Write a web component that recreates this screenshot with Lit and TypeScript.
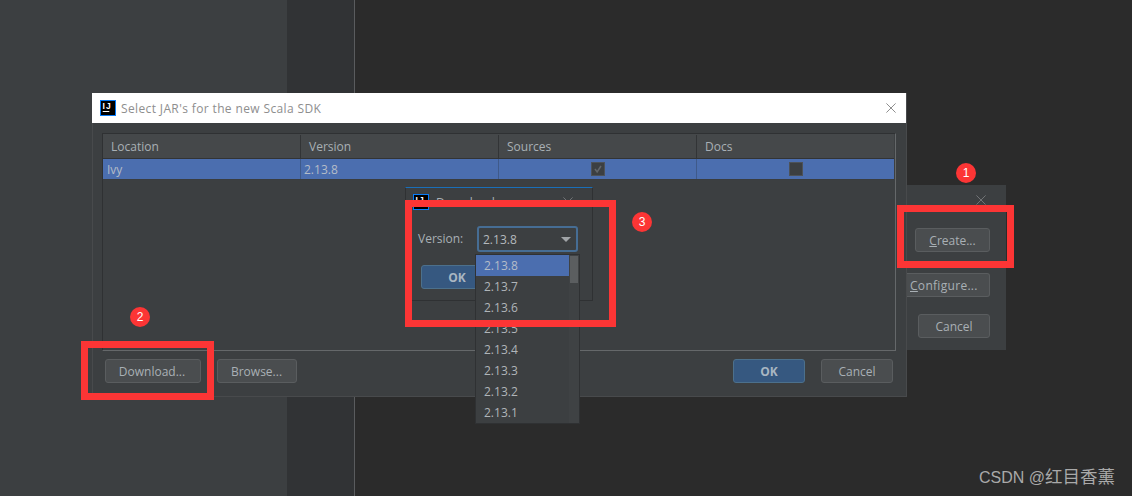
import { LitElement, html, css } from "lit";
import { customElement } from "lit/decorators.js";

const logo = (cls: string) => html`<svg class=${cls} viewBox="0 0 16 16"><rect x="0.5" y="0.5" width="15" height="15" fill="#000" stroke="#087cfa"/><text x="2.5" y="8.6" font-family="Liberation Sans" font-weight="700" font-size="8.5" letter-spacing="1.2" fill="#fff">IJ</text><rect x="2.7" y="11" width="6.6" height="1" fill="#fff"/></svg>`;
const closeX = (cls: string, c: string) => html`<svg class=${cls} viewBox="0 0 12 12"><path d="M.5.5l11 11M11.5.5l-11 11" fill="none" stroke=${c}/></svg>`;

@customElement("app-root")
export class AppRoot extends LitElement {
  static styles = css`
    :host { display: block; width: 1132px; height: 496px; position: relative; overflow: hidden; background: #2b2b2b; font-family: "Open Sans", "Liberation Sans", sans-serif; font-size: 12px; color: #a9b0b5; }
    .abs { position: absolute; }
    .side { left: 0; top: 0; width: 287px; height: 496px; background: #3c3f41; }
    .side2 { left: 287px; top: 0; width: 67px; height: 496px; background: #313335; border-right: 1px solid #5a5c5e; }
    .btn { position: absolute; box-sizing: border-box; height: 24px; display: flex; align-items: center; justify-content: center; background: #4a4d4f; border: 1px solid #5a5d5f; border-radius: 3px; font-size: 12px; color: #a9b0b5; white-space: nowrap; }
    .btn.ok { background: #365880; border-color: #4c708c; font-weight: 700; color: #a9b6c2; }
    .u { text-decoration: underline; }

    .back { left: 907px; top: 185px; width: 99px; height: 165px; background: #3c3f41; }
    .back-x { position: absolute; left: 69px; top: 10px; width: 10px; height: 10px; }
    .create { left: 8px; top: 43px; width: 75px; }
    .configure { left: 0; top: 88px; width: 83px; border-left: 0; border-radius: 0 3px 3px 0; justify-content: flex-start; padding-left: 3px; letter-spacing: 0.3px; }
    .cancel-b { left: 11px; top: 129px; width: 72px; }

    .win { left: 92px; top: 93px; width: 815px; height: 304px; background: #3c3f41; box-shadow: inset 0 0 0 1px #484a4c; }
    .title { height: 30px; margin-right: 1px; background: #fff; display: flex; align-items: center; padding-left: 8px; gap: 5px; color: #8e8e8e; font-size: 12px; letter-spacing: 0.37px; }
    .t-logo { width: 16px; height: 16px; }
    .t-x { position: absolute; left: 794px; top: 10px; width: 10px; height: 10px; }
    .tbl { position: absolute; left: 10px; top: 40px; width: 794px; height: 218px; box-sizing: border-box; border: 1px solid #2f3133; border-right-color: #65686a; border-bottom-color: #65686a; }
    .row { display: grid; width: 791px; grid-template-columns: 198px 198px 198px 197px; }
    .head { height: 25px; box-sizing: border-box; background: #45484a; border-bottom: 1px solid #323436; }
    .head div { display: flex; align-items: center; padding-left: 8px; border-right: 1px solid #323436; margin-top: 1px; }
    .head div:last-child { border-right: 0; }
    .sel { height: 21px; background: #4b6eaf; border-bottom: 1px solid #3a3d3f; color: #b4bcc8; box-sizing: border-box; }
    .sel > div { display: flex; align-items: center; padding-left: 3px; border-right: 1px solid #3f5a8a; }
    .sel > div:first-child { padding-left: 4px; }
    .sel > div:last-child { border-right: 0; }
    .sel > .c { justify-content: center; padding-left: 0; }
    .cb { width: 14px; height: 14px; box-sizing: border-box; background: #3c3f41; border: 1px solid #4d5258; display: block; }
    .w-dl { left: 13px; top: 266px; width: 96px; padding-right: 2px; }
    .w-br { left: 125px; top: 266px; width: 80px; padding-right: 1px; }
    .w-ok { left: 641px; top: 266px; width: 72px; }
    .w-ca { left: 729px; top: 266px; width: 72px; }

    .dl { left: 405px; top: 187px; width: 188px; height: 114px; box-sizing: border-box; background: #3c3f41; border: 1px solid #2f3133; border-top: 1px solid #1a6fb8; }
    .d-title { position: absolute; left: 30px; top: 6px; color: #a9b0b5; font-size: 12px; letter-spacing: 0.3px; }
    .d-logo { position: absolute; left: 7px; top: 6px; width: 16px; height: 16px; }
    .d-x { position: absolute; left: 157px; top: 9px; width: 10px; height: 10px; }
    .v-label { position: absolute; left: 12px; top: 42px; }
    .combo { position: absolute; left: 71px; top: 38px; width: 101px; height: 26px; box-sizing: border-box; background: #3c3f41; border: 2px solid #466d94; border-radius: 3px; display: flex; align-items: center; padding-left: 4px; color: #b4b9bd; }
    .arrow { position: absolute; right: 5px; top: 9px; width: 0; height: 0; border-left: 5px solid transparent; border-right: 5px solid transparent; border-top: 5px solid #a0a4a7; }
    .d-ok { left: 15px; top: 77px; width: 72px; }

    .pop { left: 475px; top: 254px; width: 105px; height: 170px; box-sizing: border-box; background: #3c3f41; border: 1px solid #2f3133; }
    .it { height: 21px; display: flex; align-items: center; padding-left: 8px; color: #b0b5b9; }
    .it.on { background: #4b6eaf; margin-right: 10px; color: #b4bcc8; }
    .track { position: absolute; right: 0; top: 0; width: 10px; height: 168px; background: #3f4244; }
    .thumb { position: absolute; left: 1px; top: 1px; width: 8px; height: 27px; background: #5b5e60; }

    .red { box-sizing: border-box; border: 7px solid #fc3535; }
    .r1 { left: 897px; top: 205px; width: 117px; height: 63px; }
    .r2 { left: 81px; top: 341px; width: 133px; height: 59px; }
    .r3 { left: 405px; top: 200px; width: 211px; height: 127px; }
    .dot { width: 20px; height: 20px; border-radius: 50%; background: #fc3535; color: #fff; display: flex; align-items: center; justify-content: center; font: 12px "Liberation Sans", sans-serif; }
    .d1 { left: 956px; top: 163px; }
    .d2 { left: 130px; top: 307px; }
    .d3 { left: 632px; top: 212px; }
    .wm { left: 979px; top: 463px; font: 16px "Liberation Sans", "Noto Sans CJK SC", sans-serif; color: #a9a9a9; white-space: nowrap; }
    .wm b { font-weight: 400; font-size: 17.5px; }
  `;

  render() {
    const vers = ["2.13.8", "2.13.7", "2.13.6", "2.13.5", "2.13.4", "2.13.3", "2.13.2", "2.13.1"];
    return html`
      <div class="abs side"></div>
      <div class="abs side2"></div>

      <div class="abs back">
        ${closeX("back-x", "#7d8082")}
        <div class="btn create"><span><span class="u">C</span>reate...</span></div>
        <div class="btn configure"><span><span class="u">C</span>onfigure...</span></div>
        <div class="btn cancel-b">Cancel</div>
      </div>

      <div class="abs win">
        <div class="title">${logo("t-logo")}<span>Select JAR's for the new Scala SDK</span></div>
        ${closeX("t-x", "#777")}
        <div class="tbl">
          <div class="row head"><div>Location</div><div>Version</div><div>Sources</div><div>Docs</div></div>
          <div class="row sel">
            <div>Ivy</div><div>2.13.8</div>
            <div class="c"><svg class="cb" viewBox="0 0 14 14"><path d="M3.5 7l2.5 3.5 4.5-7" fill="none" stroke="#62666a" stroke-width="1.8"/></svg></div>
            <div class="c"><span class="cb"></span></div>
          </div>
        </div>
        <div class="btn w-dl">Download...</div>
        <div class="btn w-br">Browse...</div>
        <div class="btn ok w-ok">OK</div>
        <div class="btn w-ca">Cancel</div>
      </div>

      <div class="abs dl">
        ${logo("d-logo")}
        <span class="d-title">Download</span>
        ${closeX("d-x", "#7d8082")}
        <span class="v-label">Version:</span>
        <div class="combo">2.13.8<span class="arrow"></span></div>
        <div class="btn ok d-ok">OK</div>
      </div>

      <div class="abs pop">
        ${vers.map((v, i) => html`<div class="it ${i === 0 ? "on" : ""}">${v}</div>`)}
        <div class="track"><div class="thumb"></div></div>
      </div>

      <div class="abs red r1"></div>
      <div class="abs red r2"></div>
      <div class="abs red r3"></div>
      <div class="abs dot d1">1</div>
      <div class="abs dot d2">2</div>
      <div class="abs dot d3">3</div>
      <div class="abs wm">CSDN @<b>红目香薰</b></div>
    `;
  }
}
